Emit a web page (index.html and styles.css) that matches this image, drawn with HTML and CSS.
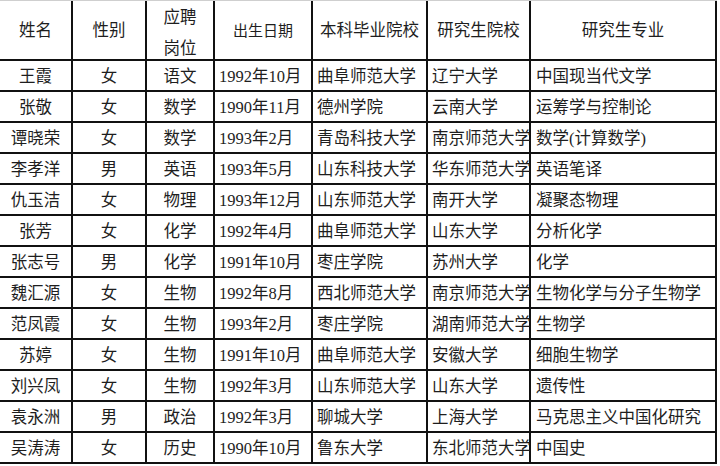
FILE: index.html
```html
<!DOCTYPE html>
<html lang="zh-CN">
<head>
<meta charset="utf-8">
<title>录取名单</title>
<link rel="stylesheet" href="styles.css">
</head>
<body>
<div class="sheet">
  <div class="cell head c">姓名</div>
  <div class="cell head c">性别</div>
  <div class="cell head c two">应聘<br>岗位</div>
  <div class="cell head c small">出生日期</div>
  <div class="cell head c">本科毕业院校</div>
  <div class="cell head c">研究生院校</div>
  <div class="cell head c">研究生专业</div>

  <div class="cell c">王霞</div><div class="cell c">女</div><div class="cell c">语文</div><div class="cell l">1992年10月</div><div class="cell l">曲阜师范大学</div><div class="cell l">辽宁大学</div><div class="cell l wide">中国现当代文学</div>
  <div class="cell c">张敬</div><div class="cell c">女</div><div class="cell c">数学</div><div class="cell l">1990年11月</div><div class="cell l">德州学院</div><div class="cell l">云南大学</div><div class="cell l wide">运筹学与控制论</div>
  <div class="cell c">谭晓荣</div><div class="cell c">女</div><div class="cell c">数学</div><div class="cell l">1993年2月</div><div class="cell l">青岛科技大学</div><div class="cell l">南京师范大学</div><div class="cell l wide">数学(计算数学)</div>
  <div class="cell c">李孝洋</div><div class="cell c">男</div><div class="cell c">英语</div><div class="cell l">1993年5月</div><div class="cell l">山东科技大学</div><div class="cell l">华东师范大学</div><div class="cell l wide">英语笔译</div>
  <div class="cell c">仇玉洁</div><div class="cell c">女</div><div class="cell c">物理</div><div class="cell l">1993年12月</div><div class="cell l">山东师范大学</div><div class="cell l">南开大学</div><div class="cell l wide">凝聚态物理</div>
  <div class="cell c">张芳</div><div class="cell c">女</div><div class="cell c">化学</div><div class="cell l">1992年4月</div><div class="cell l">曲阜师范大学</div><div class="cell l">山东大学</div><div class="cell l wide">分析化学</div>
  <div class="cell c">张志号</div><div class="cell c">男</div><div class="cell c">化学</div><div class="cell l">1991年10月</div><div class="cell l">枣庄学院</div><div class="cell l">苏州大学</div><div class="cell l wide">化学</div>
  <div class="cell c">魏汇源</div><div class="cell c">女</div><div class="cell c">生物</div><div class="cell l">1992年8月</div><div class="cell l">西北师范大学</div><div class="cell l">南京师范大学</div><div class="cell l wide">生物化学与分子生物学</div>
  <div class="cell c">范凤霞</div><div class="cell c">女</div><div class="cell c">生物</div><div class="cell l">1993年2月</div><div class="cell l">枣庄学院</div><div class="cell l">湖南师范大学</div><div class="cell l wide">生物学</div>
  <div class="cell c">苏婷</div><div class="cell c">女</div><div class="cell c">生物</div><div class="cell l">1991年10月</div><div class="cell l">曲阜师范大学</div><div class="cell l">安徽大学</div><div class="cell l wide">细胞生物学</div>
  <div class="cell c">刘兴凤</div><div class="cell c">女</div><div class="cell c">生物</div><div class="cell l">1992年3月</div><div class="cell l">山东师范大学</div><div class="cell l">山东大学</div><div class="cell l wide">遗传性</div>
  <div class="cell c">袁永洲</div><div class="cell c">男</div><div class="cell c">政治</div><div class="cell l">1992年3月</div><div class="cell l">聊城大学</div><div class="cell l">上海大学</div><div class="cell l wide">马克思主义中国化研究</div>
  <div class="cell c">吴涛涛</div><div class="cell c">女</div><div class="cell c">历史</div><div class="cell l">1990年10月</div><div class="cell l">鲁东大学</div><div class="cell l">东北师范大学</div><div class="cell l wide">中国史</div>
</div>
</body>
</html>
```

FILE: styles.css
```css
html, body {
  margin: 0;
  padding: 0;
  background: #ffffff;
}

body {
  width: 720px;
  height: 466px;
  overflow: hidden;
  font-family: "Liberation Serif", "Noto Sans CJK SC", serif;
  font-size: 16.5px;
  color: #1e1e1e;
}

.sheet {
  display: grid;
  grid-template-columns: 73px 74px 68px 98px 115px 103px 186px;
  grid-template-rows: 60px repeat(13, 31px);
  border-top: 1px solid #cfcfcf;
  width: 717px;
}

.cell {
  box-sizing: border-box;
  border-right: 2px solid #111111;
  border-bottom: 2px solid #111111;
  display: flex;
  align-items: center;
  white-space: nowrap;
  overflow: visible;
  line-height: 1;
  padding-top: 4px;
}

.c {
  justify-content: center;
  text-align: center;
}

.l {
  justify-content: flex-start;
  padding-left: 4px;
}

.wide {
  padding-left: 5px;
}

.head {
  padding-top: 3px;
}

.two {
  line-height: 31px;
  padding-top: 5px;
}

.small {
  font-size: 15px;
}
```
